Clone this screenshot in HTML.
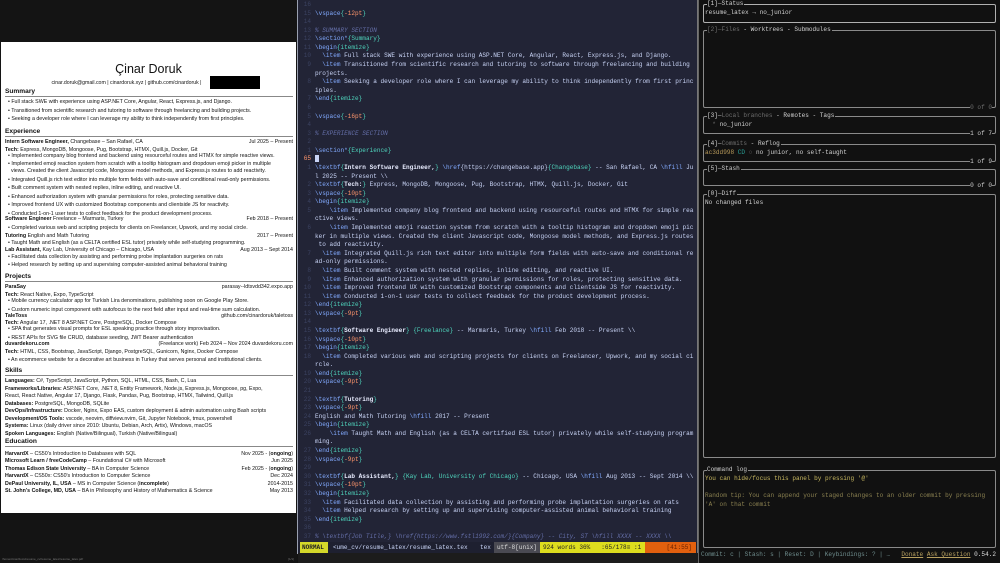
<!DOCTYPE html>
<html><head><meta charset="utf-8">
<style>
*{margin:0;padding:0;box-sizing:border-box}
body{width:1000px;height:563px;overflow:hidden;background:#121212;position:relative;font-family:"Liberation Sans",sans-serif}
#left{position:absolute;left:0;top:0;width:297px;height:563px;background:#141414}
#page{position:absolute;left:1px;top:42px;width:295px;height:471px;background:#fff;color:#111}
.l{position:absolute;left:4px;right:3px;height:8px;line-height:8px;font-size:5.3px;white-space:nowrap;display:flex;justify-content:space-between}
.l b{font-weight:bold}
.h{position:absolute;left:4px;right:3px;font-size:6.6px;font-weight:bold;border-bottom:0.6px solid #888;line-height:8px;height:9px}
.bl{padding-left:3px}
#ed{position:absolute;left:297px;top:0;width:401px;height:554px;background:#222436;border-left:1px solid #9aa0b0;border-right:1px solid #777}
#code{position:absolute;left:2px;top:1px;font-family:"Liberation Mono",monospace;font-size:6.07px;line-height:8.58px;color:#c8d3f5;white-space:pre}
.n{color:#3b4261;display:inline-block;width:15px;text-align:right;padding-right:4px}
.c{color:#82aaff}.a{color:#4fd6be}.o{color:#ff966c}.m{color:#636da6;font-style:italic}.w{color:#e8ecff;font-weight:bold}
#sl{position:absolute;left:298px;top:542px;width:399px;height:11px;background:#1e2030;font-family:"Liberation Mono",monospace;font-size:6.07px;line-height:11px;color:#c8d3f5;white-space:pre}
#sl span{position:absolute;top:0;height:11px}
#right{position:absolute;left:698px;top:0;width:302px;height:563px;background:#111;border-left:1px solid #666;font-family:"Liberation Mono",monospace;font-size:6.07px;color:#d0d0d0}
.p{position:absolute;left:4px;width:293px;border:1px solid #8a8a8a;border-radius:2px}
.t{position:absolute;top:-5px;left:3px;background:#111;line-height:8px;white-space:pre;padding-right:1px}
.f{position:absolute;bottom:-5px;right:3px;background:#111;line-height:8px;white-space:pre}
.ct{position:absolute;left:1px;top:4px;line-height:8.6px;white-space:pre}
.d{color:#6e6e6e}
</style></head><body>
<div id="left">
<div id="page">
<div style="position:absolute;left:0;right:0;top:20px;text-align:center;font-size:12.5px;line-height:14px">Çinar Doruk</div>
<div style="position:absolute;left:0;right:44px;top:37px;text-align:center;font-size:5.2px;line-height:8px">cinar.doruk@gmail.com | cinardoruk.xyz | github.com/cinardoruk |</div>
<div style="position:absolute;left:209px;top:34px;width:50px;height:13px;background:#000"></div>
<div class="h" style="top:46px">Summary</div>
<div class="l" style="top:56px"><span class="bl">• Full stack SWE with experience using ASP.NET Core, Angular, React, Express.js, and Django.</span></div>
<div class="l" style="top:65px"><span class="bl">• Transitioned from scientific research and tutoring to software through freelancing and building projects.</span></div>
<div class="l" style="top:73px"><span class="bl">• Seeking a developer role where I can leverage my ability to think independently from first principles.</span></div>
<div class="h" style="top:86px">Experience</div>
<div class="l" style="top:96px"><span><b>Intern Software Engineer,</b> Changebase – San Rafael, CA</span><span>Jul 2025 – Present</span></div>
<div class="l" style="top:104px"><span><b>Tech:</b> Express, MongoDB, Mongoose, Pug, Bootstrap, HTMX, Quill.js, Docker, Git</span></div>
<div class="l" style="top:110px"><span class="bl">• Implemented company blog frontend and backend using resourceful routes and HTMX for simple reactive views.</span></div>
<div class="l" style="top:118px"><span class="bl">• Implemented emoji reaction system from scratch with a tooltip histogram and dropdown emoji picker in multiple</span></div>
<div class="l" style="top:125px"><span class="bl">&nbsp; views. Created the client Javascript code, Mongoose model methods, and Express.js routes to add reactivity.</span></div>
<div class="l" style="top:134px"><span class="bl">• Integrated Quill.js rich text editor into multiple form fields with auto-save and conditional read-only permissions.</span></div>
<div class="l" style="top:142px"><span class="bl">• Built comment system with nested replies, inline editing, and reactive UI.</span></div>
<div class="l" style="top:151px"><span class="bl">• Enhanced authorization system with granular permissions for roles, protecting sensitive data.</span></div>
<div class="l" style="top:159px"><span class="bl">• Improved frontend UX with customized Bootstrap components and clientside JS for reactivity.</span></div>
<div class="l" style="top:168px"><span class="bl">• Conducted 1-on-1 user tests to collect feedback for the product development process.</span></div>
<div class="l" style="top:173px"><span><b>Software Engineer</b> Freelance – Marmaris, Turkey</span><span>Feb 2018 – Present</span></div>
<div class="l" style="top:182px"><span class="bl">• Completed various web and scripting projects for clients on Freelancer, Upwork, and my social circle.</span></div>
<div class="l" style="top:190px"><span><b>Tutoring</b> English and Math Tutoring</span><span>2017 – Present</span></div>
<div class="l" style="top:197px"><span class="bl">• Taught Math and English (as a CELTA certified ESL tutor) privately while self-studying programming.</span></div>
<div class="l" style="top:204px"><span><b>Lab Assistant,</b> Kay Lab, University of Chicago – Chicago, USA</span><span>Aug 2013 – Sept 2014</span></div>
<div class="l" style="top:211px"><span class="bl">• Facilitated data collection by assisting and performing probe implantation surgeries on rats</span></div>
<div class="l" style="top:219px"><span class="bl">• Helped research by setting up and supervising computer-assisted animal behavioral training</span></div>
<div class="h" style="top:231px">Projects</div>
<div class="l" style="top:241px"><span><b>ParaSay</b></span><span>parasay--ldtsvdd342.expo.app</span></div>
<div class="l" style="top:249px"><span><b>Tech:</b> React Native, Expo, TypeScript</span></div>
<div class="l" style="top:255px"><span class="bl">• Mobile currency calculator app for Turkish Lira denominations, publishing soon on Google Play Store.</span></div>
<div class="l" style="top:264px"><span class="bl">• Custom numeric input component with autofocus to the next field after input and real-time sum calculation.</span></div>
<div class="l" style="top:270px"><span><b>TaleToss</b></span><span>github.com/cinardoruk/taletoss</span></div>
<div class="l" style="top:277px"><span><b>Tech:</b> Angular 17, .NET 8 ASP.NET Core, PostgreSQL, Docker Compose</span></div>
<div class="l" style="top:283px"><span class="bl">• SPA that generates visual prompts for ESL speaking practice through story improvisation.</span></div>
<div class="l" style="top:292px"><span class="bl">• REST APIs for SVG file CRUD, database seeding, JWT Bearer authentication</span></div>
<div class="l" style="top:298px"><span><b>duvardekoru.com</b></span><span>(Freelance work) Feb 2024 – Nov 2024 duvardekoru.com</span></div>
<div class="l" style="top:306px"><span><b>Tech:</b> HTML, CSS, Bootstrap, JavaScript, Django, PostgreSQL, Gunicorn, Nginx, Docker Compose</span></div>
<div class="l" style="top:314px"><span class="bl">• An ecommerce website for a decorative art business in Turkey that serves personal and institutional clients.</span></div>
<div class="h" style="top:325px">Skills</div>
<div class="l" style="top:335px"><span><b>Languages:</b> C#, TypeScript, JavaScript, Python, SQL, HTML, CSS, Bash, C, Lua</span></div>
<div class="l" style="top:343px"><span><b>Frameworks/Libraries:</b> ASP.NET Core, .NET 8, Entity Framework, Node.js, Express.js, Mongoose, pg, Expo,</span></div>
<div class="l" style="top:350px"><span>React, React Native, Angular 17, Django, Flask, Pandas, Pug, Bootstrap, HTMX, Tailwind, Quill.js</span></div>
<div class="l" style="top:358px"><span><b>Databases:</b> PostgreSQL, MongoDB, SQLite</span></div>
<div class="l" style="top:365px"><span><b>DevOps/Infrastructure:</b> Docker, Nginx, Expo EAS, custom deployment &amp; admin automation using Bash scripts</span></div>
<div class="l" style="top:373px"><span><b>Development/OS Tools:</b> vscode, neovim, diffview.nvim, Git, Jupyter Notebook, tmux, powershell</span></div>
<div class="l" style="top:380px"><span><b>Systems:</b> Linux (daily driver since 2010: Ubuntu, Debian, Arch, Artix), Windows, macOS</span></div>
<div class="l" style="top:388px"><span><b>Spoken Languages:</b> English (Native/Bilingual), Turkish (Native/Bilingual)</span></div>
<div class="h" style="top:396px">Education</div>
<div class="l" style="top:408px"><span><b>HarvardX</b> – CS50's Introduction to Databases with SQL</span><span>Nov 2025 - (<b>ongoing</b>)</span></div>
<div class="l" style="top:415px"><span><b>Microsoft Learn / freeCodeCamp</b> – Foundational C# with Microsoft</span><span>Jun 2025</span></div>
<div class="l" style="top:423px"><span><b>Thomas Edison State University</b> – BA in Computer Science</span><span>Feb 2025 - (<b>ongoing</b>)</span></div>
<div class="l" style="top:430px"><span><b>HarvardX</b> – CS50x: CS50's Introduction to Computer Science</span><span>Dec 2024</span></div>
<div class="l" style="top:438px"><span><b>DePaul University, IL, USA</b> – MS in Computer Science (<b>incomplete</b>)</span><span>2014-2015</span></div>
<div class="l" style="top:445px"><span><b>St. John's College, MD, USA</b> – BA in Philosophy and History of Mathematics &amp; Science</span><span>May 2013</span></div>
</div>
<div style="position:absolute;left:2px;top:557px;font-size:3px;color:#777">/home/cinar/docs/resume_cv/resume_latex/resume_latex.pdf</div>
<div style="position:absolute;right:3px;top:557px;font-size:3px;color:#777">[1/1]</div>
</div>

<div id="ed">
<div id="code"><span class="n">16</span>
<span class="n">15</span><span class="c">\vspace</span><span class="a">{</span><span class="o">-12pt</span><span class="a">}</span>
<span class="n">14</span>
<span class="n">13</span><span class="m">% SUMMARY SECTION</span>
<span class="n">12</span><span class="c">\section*</span><span class="a">{Summary}</span>
<span class="n">11</span><span class="c">\begin</span><span class="a">{itemize}</span>
<span class="n">10</span>  <span class="c">\item</span> Full stack SWE with experience using ASP.NET Core, Angular, React, Express.js, and Django.
<span class="n">9</span>  <span class="c">\item</span> Transitioned from scientific research and tutoring to software through freelancing and building
<span class="n"></span>projects.
<span class="n">8</span>  <span class="c">\item</span> Seeking a developer role where I can leverage my ability to think independently from first princ
<span class="n"></span>iples.
<span class="n">7</span><span class="c">\end</span><span class="a">{itemize}</span>
<span class="n">6</span>
<span class="n">5</span><span class="c">\vspace</span><span class="a">{</span><span class="o">-16pt</span><span class="a">}</span>
<span class="n">4</span>
<span class="n">3</span><span class="m">% EXPERIENCE SECTION</span>
<span class="n">2</span>
<span class="n">1</span><span class="c">\section*</span><span class="a">{Experience}</span>
<span class="n" style="color:#ff966c">65</span><span style="background:#c8d3f5"> </span>
<span class="n">1</span><span class="c">\textbf</span><span class="a">{</span><span class="w">Intern Software Engineer,</span><span class="a">}</span> <span class="c">\href</span>{https://changebase.app}<span class="a">{Changebase}</span> -- San Rafael, CA <span class="c">\hfill</span> Ju
<span class="n"></span>l 2025 -- Present \\
<span class="n">2</span><span class="c">\textbf</span><span class="a">{</span><span class="w">Tech:</span><span class="a">}</span> Express, MongoDB, Mongoose, Pug, Bootstrap, HTMX, Quill.js, Docker, Git
<span class="n">3</span><span class="c">\vspace</span><span class="a">{</span><span class="o">-10pt</span><span class="a">}</span>
<span class="n">4</span><span class="c">\begin</span><span class="a">{itemize}</span>
<span class="n">5</span>    <span class="c">\item</span> Implemented company blog frontend and backend using resourceful routes and HTMX for simple rea
<span class="n"></span>ctive views.
<span class="n">6</span>    <span class="c">\item</span> Implemented emoji reaction system from scratch with a tooltip histogram and dropdown emoji pic
<span class="n"></span>ker in multiple views. Created the client Javascript code, Mongoose model methods, and Express.js routes
<span class="n"></span> to add reactivity.
<span class="n">7</span>  <span class="c">\item</span> Integrated Quill.js rich text editor into multiple form fields with auto-save and conditional re
<span class="n"></span>ad-only permissions.
<span class="n">8</span>  <span class="c">\item</span> Built comment system with nested replies, inline editing, and reactive UI.
<span class="n">9</span>  <span class="c">\item</span> Enhanced authorization system with granular permissions for roles, protecting sensitive data.
<span class="n">10</span>  <span class="c">\item</span> Improved frontend UX with customized Bootstrap components and clientside JS for reactivity.
<span class="n">11</span>  <span class="c">\item</span> Conducted 1-on-1 user tests to collect feedback for the product development process.
<span class="n">12</span><span class="c">\end</span><span class="a">{itemize}</span>
<span class="n">13</span><span class="c">\vspace</span><span class="a">{</span><span class="o">-9pt</span><span class="a">}</span>
<span class="n">14</span>
<span class="n">15</span><span class="c">\textbf</span><span class="a">{</span><span class="w">Software Engineer</span><span class="a">}</span> <span class="a">{Freelance}</span> -- Marmaris, Turkey <span class="c">\hfill</span> Feb 2018 -- Present \\
<span class="n">16</span><span class="c">\vspace</span><span class="a">{</span><span class="o">-10pt</span><span class="a">}</span>
<span class="n">17</span><span class="c">\begin</span><span class="a">{itemize}</span>
<span class="n">18</span>  <span class="c">\item</span> Completed various web and scripting projects for clients on Freelancer, Upwork, and my social ci
<span class="n"></span>rcle.
<span class="n">19</span><span class="c">\end</span><span class="a">{itemize}</span>
<span class="n">20</span><span class="c">\vspace</span><span class="a">{</span><span class="o">-9pt</span><span class="a">}</span>
<span class="n">21</span>
<span class="n">22</span><span class="c">\textbf</span><span class="a">{</span><span class="w">Tutoring</span><span class="a">}</span>
<span class="n">23</span><span class="c">\vspace</span><span class="a">{</span><span class="o">-9pt</span><span class="a">}</span>
<span class="n">24</span>English and Math Tutoring <span class="c">\hfill</span> 2017 -- Present
<span class="n">25</span><span class="c">\begin</span><span class="a">{itemize}</span>
<span class="n">26</span>    <span class="c">\item</span> Taught Math and English (as a CELTA certified ESL tutor) privately while self-studying program
<span class="n"></span>ming.
<span class="n">27</span><span class="c">\end</span><span class="a">{itemize}</span>
<span class="n">28</span><span class="c">\vspace</span><span class="a">{</span><span class="o">-9pt</span><span class="a">}</span>
<span class="n">29</span>
<span class="n">30</span><span class="c">\textbf</span><span class="a">{</span><span class="w">Lab Assistant,</span><span class="a">}</span> <span class="a">{Kay Lab, University of Chicago}</span> -- Chicago, USA <span class="c">\hfill</span> Aug 2013 -- Sept 2014 \\
<span class="n">31</span><span class="c">\vspace</span><span class="a">{</span><span class="o">-10pt</span><span class="a">}</span>
<span class="n">32</span><span class="c">\begin</span><span class="a">{itemize}</span>
<span class="n">33</span>  <span class="c">\item</span> Facilitated data collection by assisting and performing probe implantation surgeries on rats
<span class="n">34</span>  <span class="c">\item</span> Helped research by setting up and supervising computer-assisted animal behavioral training
<span class="n">35</span><span class="c">\end</span><span class="a">{itemize}</span>
<span class="n">36</span>
<span class="n">37</span><span class="m">% \textbf{Job Title,} \href{https://www.fstl1992.com/}{Company} -- City, ST \hfill XXXX -- XXXX \\</span></div>
</div>
<div id="sl">
<span style="left:2px;width:28px;background:#d4d82a;color:#222;font-weight:bold;padding-left:2px">NORMAL</span>
<span style="left:35px">&lt;ume_cv/resume_latex/resume_latex.tex</span>
<span style="left:182px">tex</span>
<span style="left:196px;width:46px;background:#4a4a52;color:#ddd;padding-left:3px">utf-8[unix]</span>
<span style="left:242px;width:105px;background:#dede1e;color:#222;padding-left:3px">924 words 36%   :65/178≡ :1</span>
<span style="left:347px;width:51px;background:#e2600e;color:#6a2200;text-align:right;padding-right:4px">[41:55]</span>
</div>
<div style="position:absolute;left:298px;top:553px;width:400px;height:10px;background:#1c1c1c"></div>

<div id="right">
<div class="p" style="top:4px;height:19px;border-color:#b0b0b0"><div class="t">[1]─Status</div><div class="ct">resume_latex → no_junior</div></div>
<div class="p" style="top:30px;height:78px"><div class="t"><span class="d">[2]─Files</span> - Worktrees - Submodules</div><div class="f d">0 of 0</div></div>
<div class="p" style="top:116px;height:18px"><div class="t">[3]─<span class="d">Local branches</span> - Remotes - Tags</div><div class="ct"><span class="d">  * </span>no_junior</div><div class="f">1 of 7</div></div>
<div class="p" style="top:144px;height:18px"><div class="t">[4]─<span class="d">Commits</span> - Reflog</div><div class="ct"><span style="color:#b89a5a">ac3dd998</span> <span style="color:#2aa198">CD</span> <span class="d">○</span> no junior, no self-taught</div><div class="f">1 of 9</div></div>
<div class="p" style="top:169px;height:17px"><div class="t">[5]─Stash</div><div class="f">0 of 0</div></div>
<div class="p" style="top:194px;height:264px"><div class="t">[0]─Diff</div><div class="ct">No changed files</div></div>
<div class="p" style="top:470px;height:78px"><div class="t">Command log</div><div class="ct" style="color:#c8b860">You can hide/focus this panel by pressing '@'
<span style="color:#8a8050">
Random tip: You can append your staged changes to an older commit by pressing
'A' on that commit</span></div></div>
<div style="position:absolute;left:2px;top:551px;line-height:8px;white-space:pre;color:#6e8c8c">Commit: c | Stash: s | Reset: D | Keybindings: ? | …</div>
<div style="position:absolute;right:4px;top:551px;line-height:8px;white-space:pre"><span style="color:#b8a060;text-decoration:underline">Donate</span> <span style="color:#b8a060;text-decoration:underline">Ask Question</span> <span style="color:#ddd">0.54.2</span></div>
</div>
</body></html>
